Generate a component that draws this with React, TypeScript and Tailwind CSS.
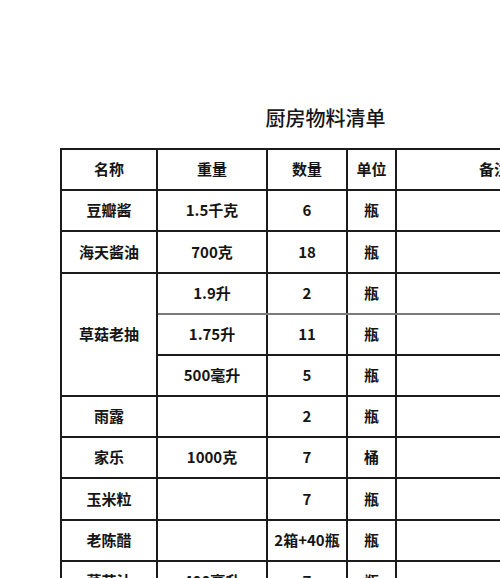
import React from "react";

const B = "border-2 border-[#1c1c1c]";

type Row = { name?: string; span?: number; w: string; q: string; u: string; tall?: boolean };

const rows: Row[] = [
  { name: "豆瓣酱", w: "1.5千克", q: "6", u: "瓶" },
  { name: "海天酱油", w: "700克", q: "18", u: "瓶", tall: true },
  { name: "草菇老抽", span: 3, w: "1.9升", q: "2", u: "瓶" },
  { w: "1.75升", q: "11", u: "瓶" },
  { w: "500毫升", q: "5", u: "瓶" },
  { name: "雨露", w: "", q: "2", u: "瓶" },
  { name: "家乐", w: "1000克", q: "7", u: "桶" },
  { name: "玉米粒", w: "", q: "7", u: "瓶", tall: true },
  { name: "老陈醋", w: "", q: "2箱+40瓶", u: "瓶" },
  { name: "蕃茄汁", w: "400毫升", q: "7", u: "瓶" },
];

export default function App() {
  return (
    <div
      className="w-[500px] h-[578px] overflow-hidden bg-white text-[#151515]"
      style={{ fontFamily: '"Noto Sans CJK SC", "Noto Sans", sans-serif' }}
    >
      <div className="pt-[104px] pl-[60px] w-[700px]">
        <div className="w-[531px] text-center text-[20px] leading-[28px] font-medium mb-[16px]">
          厨房物料清单
        </div>
        <table className="border-collapse table-fixed w-[531px] text-[15px] font-semibold text-center">
          <colgroup>
            <col className="w-[96px]" />
            <col className="w-[110px]" />
            <col className="w-[80px]" />
            <col className="w-[49px]" />
            <col className="w-[196px]" />
          </colgroup>
          <tbody>
            <tr className="h-[41px]">
              <td className={B}>名称</td>
              <td className={B}>重量</td>
              <td className={B}>数量</td>
              <td className={B}>单位</td>
              <td className="border-2 border-[#1c1c1c] border-l-[#8a8a8a]">备注</td>
            </tr>
            {rows.map((r, i) => (
              <tr key={i} className={r.tall ? "h-[42px]" : "h-[41px]"}>
                {r.name !== undefined && (
                  <td className={B} rowSpan={r.span ?? 1}>
                    {r.name}
                  </td>
                )}
                <td className={i === 2 ? "border-2 border-[#1c1c1c] border-b-[#7a7a7a]" : B}>{r.w}</td>
                <td className={i === 2 ? "border-2 border-[#1c1c1c] border-b-[#7a7a7a]" : B}>{r.q}</td>
                <td className={i === 2 ? "border-2 border-[#1c1c1c] border-b-[#7a7a7a]" : B}>{r.u}</td>
                <td className={i === 2 ? "border-2 border-[#1c1c1c] border-l-[#8a8a8a] border-b-[#7a7a7a]" : "border-2 border-[#1c1c1c] border-l-[#8a8a8a]"}></td>
              </tr>
            ))}
          </tbody>
        </table>
      </div>
    </div>
  );
}
